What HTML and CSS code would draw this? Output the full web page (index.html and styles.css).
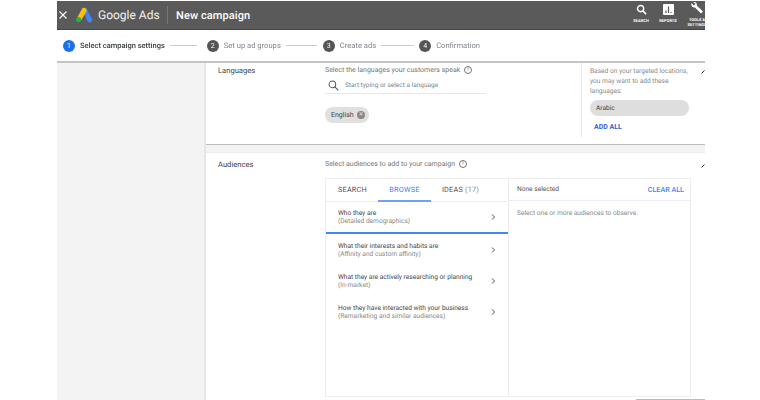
FILE: index.html
```html
<!DOCTYPE html>
<html lang="en">
<head>
    <meta charset="UTF-8">
    <title>New campaign</title>
    <link rel="stylesheet" href="styles.css">
</head>
<body>
    <div class="app">
        <div class="topbar">
            <svg class="close" viewBox="0 0 8 8" width="8" height="8"><path d="M0.5 0.5 L7.5 7.5 M7.5 0.5 L0.5 7.5" stroke="#fff" stroke-width="1.1"/></svg>
            <svg class="logo" viewBox="0 0 18 16" width="18" height="16">
                <path d="M7 1.5 L11 0.5 L17 12 A2.6 2.6 0 0 1 12.6 14.6 Z" fill="#4285f4"/>
                <path d="M7.2 1.6 A2.6 2.6 0 0 1 11.4 4.4 L6.4 13 L2.2 10.4 Z" fill="#fbbc04"/>
                <circle cx="3.6" cy="12.6" r="2.6" fill="#34a853"/>
            </svg>
            <span class="brand">Google Ads</span>
            <span class="title">New campaign</span>
            <div class="tools">
                <div class="tool tool-search">
                    <svg viewBox="0 0 12 12" width="11" height="11"><circle cx="5" cy="5" r="3.4" fill="none" stroke="#fff" stroke-width="1.5"/><path d="M7.5 7.5 L11 11" stroke="#fff" stroke-width="1.7"/></svg>
                    <span>SEARCH</span>
                </div>
                <div class="tool tool-reports">
                    <svg viewBox="0 0 11 11" width="11" height="11"><rect width="11" height="11" rx="1" fill="#fff"/><path d="M3 9V6.5M5.5 9V2.5M8 9V8" stroke="#5a5a5a" stroke-width="1.2"/></svg>
                    <span>REPORTS</span>
                </div>
                <div class="tool tool-settings">
                    <svg viewBox="0 0 14 13" width="14" height="13"><path d="M1.5 1 L4 3.4 L5.6 2 L3.2 0 C5.4 -0.6 7.2 1 6.8 3.4 L13 9.4 L11 11.6 L5 5.4 C2.6 6 0.6 3.8 1.5 1 Z" fill="#fff"/></svg>
                    <span>TOOLS &amp;<br>SETTINGS</span>
                </div>
            </div>
        </div>

        <div class="stepper">
            <span class="num active">1</span><span class="step-name active">Select campaign settings</span><span class="line line1"></span>
            <span class="num">2</span><span class="step-name">Set up ad groups</span><span class="line line2"></span>
            <span class="num">3</span><span class="step-name">Create ads</span><span class="line line3"></span>
            <span class="num">4</span><span class="step-name">Confirmation</span>
        </div>

        <div class="main">
            <div class="sidebar"></div>
            <div class="content">
                <div class="card card-lang">
                    <div class="label">Languages</div>
                    <div class="lang-field">
                        <p class="hint">Select the languages your customers speak <span class="help">?</span></p>
                        <div class="search-row">
                            <svg viewBox="0 0 12 12" width="11" height="11"><circle cx="4.8" cy="4.8" r="3.6" fill="none" stroke="#555" stroke-width="1.1"/><path d="M7.5 7.5 L11.2 11.2" stroke="#555" stroke-width="1.2"/></svg>
                            <span>Start typing or select a language</span>
                        </div>
                        <div class="chip">English <span class="chip-x">&#10005;</span></div>
                    </div>
                    <div class="lang-side">
                        <p>Based on your targeted locations, you may want to add these languages:</p>
                        <div class="suggest">Arabic</div>
                        <div class="add-all">ADD ALL</div>
                    </div>
                    <svg class="expand" viewBox="0 0 4 4" width="4" height="4"><path d="M0.5 3.5 L3.5 0.5" stroke="#333" stroke-width="1"/></svg>
                </div>

                <div class="card card-aud">
                    <div class="label">Audiences</div>
                    <div class="aud-field">
                        <p class="hint">Select audiences to add to your campaign <span class="help">?</span></p>
                        <div class="panel">
                            <div class="panel-left">
                                <div class="tabs">
                                    <span class="tab">SEARCH</span>
                                    <span class="tab on">BROWSE</span>
                                    <span class="tab">IDEAS <em>(17)</em></span>
                                </div>
                                <div class="row row-on">
                                    <div><b>Who they are</b><i>(Detailed demographics)</i></div>
                                    <svg viewBox="0 0 6 8" width="5" height="8"><path d="M1 1 L4.5 4 L1 7" fill="none" stroke="#555" stroke-width="1.1"/></svg>
                                </div>
                                <div class="row">
                                    <div><b>What their interests and habits are</b><i>(Affinity and custom affinity)</i></div>
                                    <svg viewBox="0 0 6 8" width="5" height="8"><path d="M1 1 L4.5 4 L1 7" fill="none" stroke="#555" stroke-width="1.1"/></svg>
                                </div>
                                <div class="row">
                                    <div><b>What they are actively researching or planning</b><i>(In-market)</i></div>
                                    <svg viewBox="0 0 6 8" width="5" height="8"><path d="M1 1 L4.5 4 L1 7" fill="none" stroke="#555" stroke-width="1.1"/></svg>
                                </div>
                                <div class="row">
                                    <div><b>How they have interacted with your business</b><i>(Remarketing and similar audiences)</i></div>
                                    <svg viewBox="0 0 6 8" width="5" height="8"><path d="M1 1 L4.5 4 L1 7" fill="none" stroke="#555" stroke-width="1.1"/></svg>
                                </div>
                            </div>
                            <div class="panel-right">
                                <div class="selected">
                                    <span>None selected</span>
                                    <span class="clear">CLEAR ALL</span>
                                </div>
                                <p class="observe">Select one or more audiences to observe.</p>
                            </div>
                        </div>
                    </div>
                    <svg class="expand" viewBox="0 0 4 4" width="4" height="4"><path d="M0.5 3.5 L3.5 0.5" stroke="#333" stroke-width="1"/></svg>
                    <div class="scrollbar"></div>
                </div>
            </div>
        </div>
    </div>
</body>
</html>
```

FILE: styles.css
```css
body,p{ margin: 0;}
body{
    background-color: #fff;
    font-family: Roboto, "Liberation Sans", sans-serif;
    text-rendering: geometricPrecision;
    color: #5f6368;
}
.app{
    width: 648px;
    height: 400px;
    margin-left: 57px;
    overflow: hidden;
    display: flex;
    flex-direction: column;
    filter: blur(.3px);
}
.topbar{
    flex: none;
    display: flex;
    align-items: center;
    height: 28px;
    margin-top: 1px;
    background-color: #5a5a5a;
    border-bottom: 1px solid #444;
    color: #fff;
}
.close{
    flex: none;
    margin: 0 8px 0 2px;
}
.logo{
    flex: none;
}
.brand{
    flex: none;
    margin-left: 5px;
    width: 69px;
    font-size: 12px;
    color: #f1f1f1;
    border-right: 1px solid #777;
    line-height: 18px;
}
.title{
    margin-left: 8px;
    font-size: 11px;
    font-weight: 500;
    letter-spacing: .1px;
}
.tools{
    display: flex;
    margin-left: auto;
    height: 100%;
}
.tool{
    display: flex;
    flex-direction: column;
    align-items: center;
    flex: none;
    padding-top: 3px;
    font-size: 4px;
    font-weight: 700;
    line-height: 5px;
    text-align: center;
}
.tool svg{
    margin-bottom: 3px;
}
.tool-search{
    width: 28px;
}
.tool-reports{
    width: 26px;
    margin-right: 1px;
}
.tool-settings{
    width: 30px;
    padding-top: 1px;
    margin-right: -7px;
    overflow: hidden;
}
.tool-settings span{
    margin-top: -1px;
}
.stepper{
    flex: none;
    display: flex;
    align-items: center;
    height: 31px;
    padding-left: 6px;
    border-bottom: 2px solid #c4c4c4;
    font-size: 7.6px;
    color: #80868b;
}
.num{
    flex: none;
    width: 12px;
    height: 12px;
    margin-right: 5px;
    border-radius: 50%;
    background-color: #555;
    color: #fff;
    font-size: 7px;
    line-height: 12px;
    text-align: center;
}
.num.active{
    background-color: #1a73e8;
}
.step-name.active{
    font-size: 7.5px;
    color: #3c4043;
    font-weight: 500;
}
.line{
    height: 1px;
    margin: 0 5px;
    background-color: #ccc;
}
.line1{
    width: 27px;
    margin-right: 10px;
}
.line2{
    width: 31px;
    margin-right: 6px;
}
.line3{
    width: 33px;
}
.main{
    flex: 1;
    display: flex;
    min-height: 0;
}
.sidebar{
    flex: none;
    width: 147px;
    background-color: #f3f3f3;
    border-right: 2px solid #e6e6e6;
}
.content{
    flex: 1;
    background-color: #f3f3f3;
}
.card{
    position: relative;
    display: grid;
    background-color: #fff;
}
.card-lang{
    grid-template-columns: 119px 256px 124px;
    height: 81px;
    border-bottom: 1px solid #bcbcbc;
}
.card-aud{
    grid-template-columns: 119px 1fr;
    height: 248px;
    margin-top: 7px;
    border-top: 1px solid #ececec;
}
.label{
    padding: 3px 0 0 12px;
    font-size: 7.6px;
    color: #444;
}
.card-aud .label{
    padding-top: 7px;
}
.hint{
    font-size: 7px;
    line-height: 10px;
    color: #777;
}
.help{
    display: inline-block;
    width: 6px;
    height: 6px;
    margin-left: 2px;
    border: 1px solid #777;
    border-radius: 50%;
    font-size: 5px;
    line-height: 6px;
    text-align: center;
    vertical-align: 1px;
}
.lang-field{
    padding-top: 2px;
}
.search-row{
    display: flex;
    align-items: center;
    gap: 6px;
    width: 158px;
    height: 12px;
    margin-top: 4px;
    padding-bottom: 2px;
    padding-left: 3px;
    border-bottom: 1px solid #e8e8e8;
    font-size: 6.5px;
    color: #80868b;
}
.chip{
    display: flex;
    align-items: center;
    justify-content: space-between;
    width: 44px;
    height: 16px;
    box-sizing: border-box;
    margin-top: 13px;
    padding: 0 4px 0 6px;
    border-radius: 8px;
    background-color: #e0e0e0;
    font-size: 7px;
    color: #444;
}
.chip-x{
    width: 8px;
    height: 8px;
    border-radius: 50%;
    background-color: #888;
    color: #e0e0e0;
    font-size: 6px;
    line-height: 8px;
    text-align: center;
}
.lang-side{
    height: 74px;
    padding-left: 8px;
    border-left: 1px solid #e6e6e6;
    font-size: 6.6px;
    line-height: 10px;
    color: #888;
}
.lang-side p{
    padding-top: 3px;
    width: 104px;
}
.suggest{
    width: 93px;
    height: 16px;
    margin-top: 4px;
    padding-left: 6px;
    border-radius: 8px;
    background-color: #dedede;
    color: #444;
    line-height: 16px;
}
.add-all{
    margin-top: 6px;
    padding-left: 4px;
    font-size: 7px;
    font-weight: 700;
    color: #2f63d8;
}
.expand{
    position: absolute;
    right: 0;
    top: 7px;
}
.card-aud .expand{
    top: 11px;
}
.aud-field{
    padding-top: 6px;
}
.panel{
    display: flex;
    width: 366px;
    height: 219px;
    margin-top: 9px;
    border: 1px solid #ededed;
    box-sizing: border-box;
}
.panel-left{
    flex: none;
    width: 182px;
    border-right: 1px solid #ededed;
}
.tabs{
    display: flex;
    height: 22px;
    padding-left: 12px;
    border-bottom: 1px solid #e4ecf7;
    font-size: 7.3px;
    line-height: 21px;
    letter-spacing: .2px;
    color: #555;
}
.tab{
    margin-right: 11px;
}
.tab.on{
    width: 53px;
    height: 21px;
    margin-right: 11px;
    border-bottom: 2px solid #6ea0f5;
    color: #4285f4;
    text-align: center;
}
.tab em{
    font-style: normal;
    color: #888;
}
.row{
    display: flex;
    align-items: center;
    justify-content: space-between;
    height: 31px;
    padding: 0 12px;
    font-size: 6.6px;
    line-height: 8px;
}
.row b{
    display: block;
    font-weight: 400;
    color: #444;
}
.row i{
    display: block;
    font-style: normal;
    color: #888;
}
.row-on{
    height: 30px;
    border-bottom: 2px solid #4285f4;
}
.panel-right{
    flex: 1;
}
.selected{
    display: flex;
    justify-content: space-between;
    height: 21px;
    padding: 0 6px 0 8px;
    border-bottom: 1px solid #e8edf5;
    font-size: 6.6px;
    line-height: 21px;
    color: #555;
}
.clear{
    font-size: 7.2px;
    font-weight: 500;
    color: #4285f4;
}
.observe{
    padding: 8px 8px 0;
    font-size: 6.6px;
    color: #888;
}
.scrollbar{
    position: absolute;
    right: 0;
    bottom: 1px;
    width: 69px;
    height: 1px;
    background-color: #bbb;
}
```
